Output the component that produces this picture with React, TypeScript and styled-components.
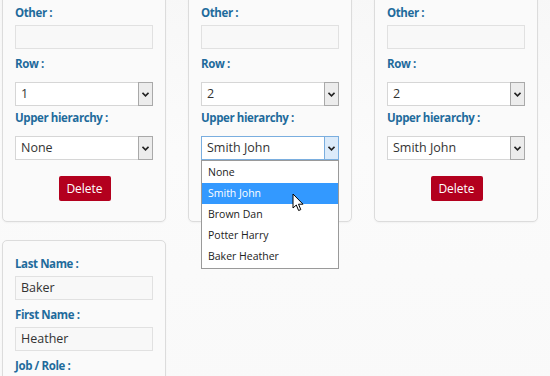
import React from "react";
import styled, { createGlobalStyle, css } from "styled-components";

const Global = createGlobalStyle`
  html, body { margin: 0; padding: 0; background: #fafafa; overflow: hidden; }
  body { font-family: "Open Sans", "Noto Sans", Arial, sans-serif; }
`;

const Page = styled.div`
  display: grid;
  grid-template-columns: repeat(3, 164px);
  column-gap: 22px;
  row-gap: 18px;
  padding-left: 2px;
  margin-top: -9px;
  width: 550px;
  height: 400px;
  background: linear-gradient(180deg, #f7f7f7 0%, #fbfbfb 40%, #f9f9f9 100%);
`;

const Card = styled.div<{ $padTop?: number }>`
  position: relative;
  box-sizing: border-box;
  width: 164px;
  border: 1px solid #dcdcdc;
  border-radius: 5px;
  background: #fafafa;
  box-shadow: 0 1px 2px rgba(0, 0, 0, 0.04);
  padding: ${(p) => p.$padTop ?? 13}px 11px 20px 12px;
  display: flex;
  flex-direction: column;
  align-items: flex-start;
`;

const Label = styled.div`
  font-size: 11.5px;
  line-height: 16px;
  font-weight: 700;
  letter-spacing: -0.4px;
  color: #1f6b9c;
  margin-bottom: 4px;
  white-space: nowrap;
`;

const TextBox = styled.div`
  box-sizing: border-box;
  width: 138px;
  height: 24px;
  border: 1px solid #e1e1e1;
  background: #f8f8f8;
  font-size: 12.5px;
  line-height: 22px;
  color: #333;
  padding-left: 5px;
  margin-bottom: 7px;
`;

const SelectBox = styled.div<{ $focused?: boolean }>`
  position: relative;
  box-sizing: border-box;
  width: 138px;
  height: 24px;
  border: 1px solid ${(p) => (p.$focused ? "#7aaedf" : "#d6d6d6")};
  background: #fff;
  display: flex;
  align-items: stretch;
  margin-top: 6px;
  margin-bottom: 4px;
`;

const SelectValue = styled.div`
  flex: 1;
  font-size: 12.5px;
  line-height: 22px;
  color: #333;
  padding-left: 5px;
`;

const ArrowBox = styled.div<{ $focused?: boolean }>`
  box-sizing: border-box;
  width: 15px;
  margin: -1px -1px -1px 0;
  border: 1px solid ${(p) => (p.$focused ? "#7aaedf" : "#a9a9a9")};
  background: ${(p) => (p.$focused ? "#dcebfa" : "#ececec")};
  display: flex;
  align-items: center;
  justify-content: center;
`;

const ButtonRow = styled.div<{ $hidden?: boolean }>`
  align-self: stretch;
  display: flex;
  justify-content: center;
  margin-top: 12px;
  visibility: ${(p) => (p.$hidden ? "hidden" : "visible")};
`;

const DeleteButton = styled.div`
  box-sizing: border-box;
  width: 52px;
  height: 25px;
  border-radius: 2px;
  background: #b3001e;
  color: #fff;
  font-size: 12px;
  line-height: 25px;
  text-align: center;
`;

const DropList = styled.div`
  position: absolute;
  left: -1px;
  right: -1px;
  top: 23px;
  box-sizing: border-box;
  border: 1px solid #9a9a9a;
  background: #fff;
  padding: 1px 0;
  z-index: 5;
`;

const DropItem = styled.div<{ $active?: boolean }>`
  height: 21px;
  line-height: 21px;
  font-size: 10.5px;
  padding-left: 6px;
  color: #222;
  ${(p) =>
    p.$active &&
    css`
      background: #3399ff;
      color: #fff;
    `}
`;

const Cursor = styled.svg`
  position: absolute;
  left: 90px;
  top: 32px;
  z-index: 6;
`;

const Chevron = () => (
  <svg width="7" height="5" viewBox="0 0 7 5">
    <path d="M0.5 0.8 L3.5 3.8 L6.5 0.8" fill="none" stroke="#222" strokeWidth="1.6" />
  </svg>
);

const Select = ({ value, focused, options }: { value: string; focused?: boolean; options?: string[] }) => (
  <SelectBox $focused={focused}>
    <SelectValue>{value}</SelectValue>
    <ArrowBox $focused={focused}>
      <Chevron />
    </ArrowBox>
    {options && (
      <DropList>
        {options.map((o) => (
          <DropItem key={o} $active={o === value}>
            {o}
          </DropItem>
        ))}
        <Cursor width="12" height="19" viewBox="0 0 12 19">
          <path
            d="M1 1 L1 15 L4.3 12 L6.6 17.5 L8.8 16.6 L6.5 11.2 L11 11.2 Z"
            fill="#fff"
            stroke="#000"
            strokeWidth="1"
            strokeLinejoin="round"
          />
        </Cursor>
      </DropList>
    )}
  </SelectBox>
);

const people = ["None", "Smith John", "Brown Dan", "Potter Harry", "Baker Heather"];

const EmployeeCard = ({ row, upper, open }: { row: string; upper: string; open?: boolean }) => (
  <Card>
    <Label>Other :</Label>
    <TextBox />
    <Label>Row :</Label>
    <Select value={row} />
    <Label>Upper hierarchy :</Label>
    <Select value={upper} focused={open} options={open ? people : undefined} />
    <ButtonRow $hidden={open}>
      <DeleteButton>Delete</DeleteButton>
    </ButtonRow>
  </Card>
);

export default function App() {
  return (
    <>
      <Global />
      <Page>
        <EmployeeCard row="1" upper="None" />
        <EmployeeCard row="2" upper="Smith John" open />
        <EmployeeCard row="2" upper="Smith John" />
        <Card $padTop={15}>
          <Label>Last Name :</Label>
          <TextBox>Baker</TextBox>
          <Label>First Name :</Label>
          <TextBox>Heather</TextBox>
          <Label>Job / Role :</Label>
          <TextBox />
        </Card>
      </Page>
    </>
  );
}
